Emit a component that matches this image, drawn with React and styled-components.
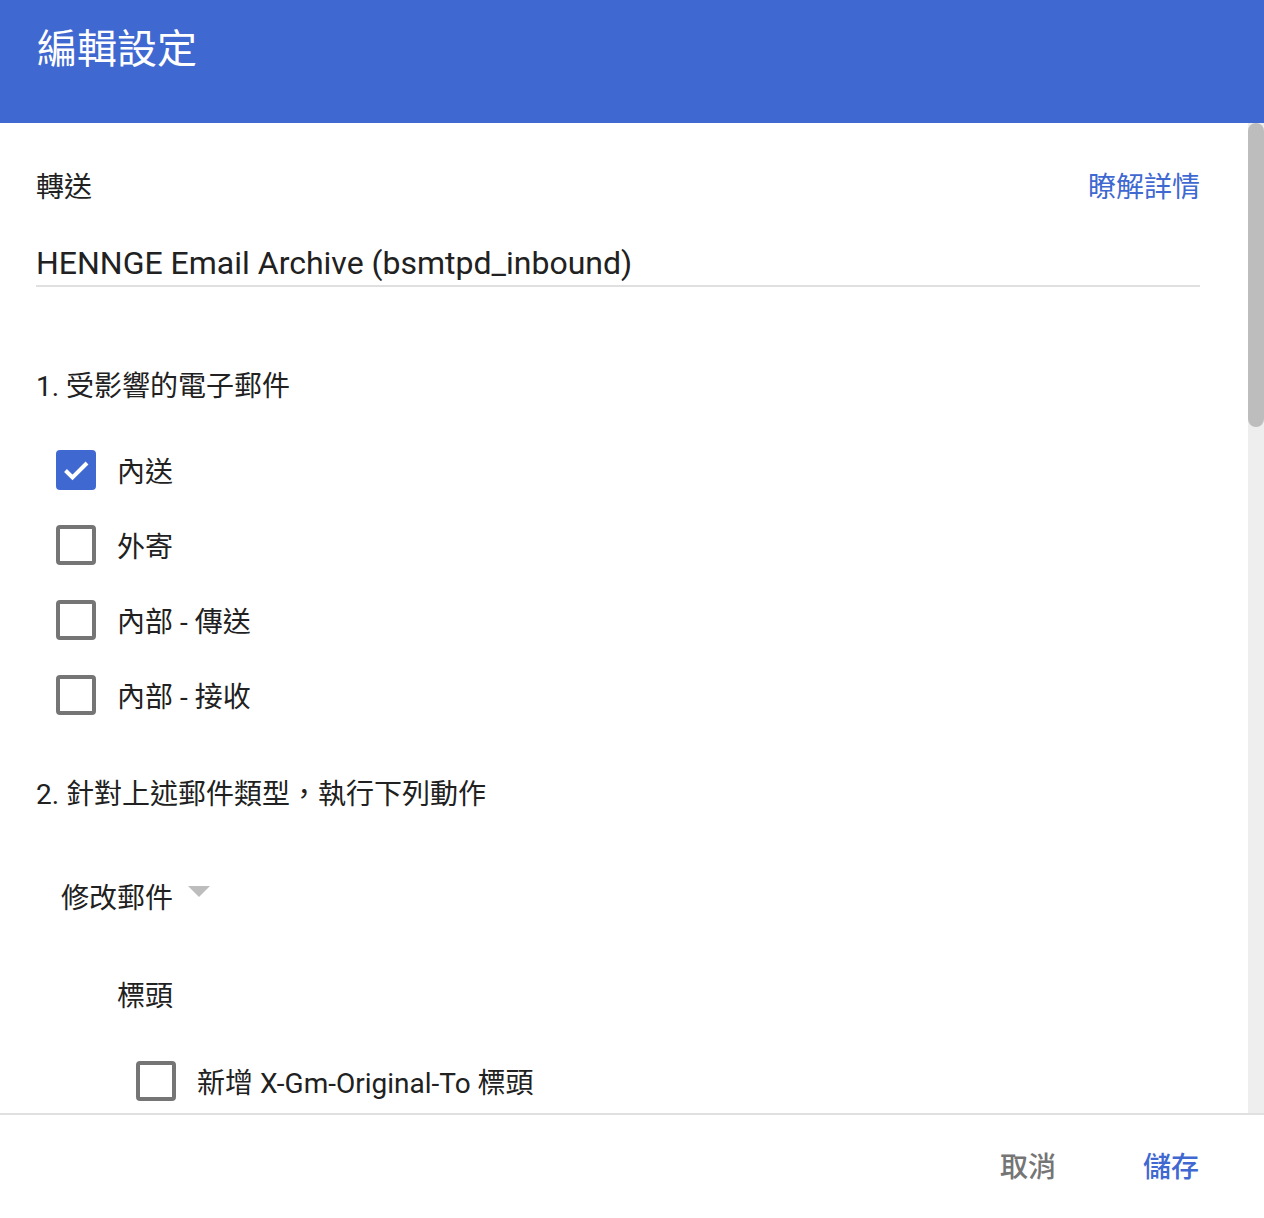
import React from 'react';
import styled, { createGlobalStyle } from 'styled-components';

const BLUE = '#4068d1';
const TEXT = '#212121';

const GlobalStyle = createGlobalStyle`
  html, body {
    margin: 0;
    padding: 0;
    background: #ffffff;
  }
  body {
    font-family: Roboto, "Noto Sans CJK TC", "Noto Sans", sans-serif;
    color: ${TEXT};
  }
`;

const Dialog = styled.div`
  display: flex;
  flex-direction: column;
  width: 1264px;
  height: 1218px;
  overflow: hidden;
`;

const Header = styled.header`
  flex: 0 0 123px;
  background: ${BLUE};
  color: #ffffff;
  box-sizing: border-box;
  padding: 24px 0 0 37px;
`;

const Title = styled.h1`
  margin: 0;
  font-size: 40px;
  line-height: 52px;
  font-weight: 400;
`;

const Body = styled.div`
  flex: 1 1 auto;
  min-height: 0;
  display: flex;
`;

const Scroller = styled.div`
  flex: 1 1 auto;
  overflow: hidden;
`;

/* scrollbar drawn by hand, the headless page hides the native one */
const Track = styled.div`
  flex: 0 0 16px;
  background: #eeeeee;
  display: flex;
  flex-direction: column;
`;

const Thumb = styled.div`
  height: 304px;
  background: #bdbdbd;
  border-radius: 8px;
`;

const Content = styled.div`
  padding: 42px 48px 40px 36px;
`;

const TopRow = styled.div`
  display: flex;
  justify-content: space-between;
  align-items: center;
  font-size: 28px;
  line-height: 46px;
`;

const Link = styled.a`
  color: ${BLUE};
  text-decoration: none;
`;

const Field = styled.div`
  margin-top: 30px;
  font-size: 32px;
  line-height: 44px;
  border-bottom: 2px solid #e0e0e0;
`;

const SectionTitle = styled.div`
  margin-top: ${p => p.$top}px;
  font-size: 28px;
  line-height: 44px;
`;

const OptionList = styled.div`
  margin-top: ${p => p.$top || 0}px;
  padding-left: ${p => p.$indent}px;
  display: flex;
  flex-direction: column;
`;

const Option = styled.label`
  display: flex;
  align-items: center;
  gap: 21px;
  height: 75px;
  font-size: 28px;
`;

const Box = styled.span`
  flex: 0 0 auto;
  box-sizing: border-box;
  width: 40px;
  height: 40px;
  border-radius: 4px;
  border: ${p => (p.$checked ? 'none' : '4px solid #757575')};
  background: ${p => (p.$checked ? BLUE : 'transparent')};
  display: flex;
  align-items: center;
  justify-content: center;
`;

const Select = styled.div`
  margin-top: 60px;
  padding-left: 25px;
  display: flex;
  align-items: center;
  gap: 15px;
  font-size: 28px;
  line-height: 44px;
`;

const Caret = styled.span`
  width: 0;
  height: 0;
  border-left: 11px solid transparent;
  border-right: 11px solid transparent;
  border-top: 11px solid #bdbdbd;
  margin-top: -16px;
`;

const SubTitle = styled.div`
  margin-top: 54px;
  padding-left: 81px;
  font-size: 28px;
  line-height: 44px;
`;

const Footer = styled.footer`
  flex: 0 0 105px;
  box-sizing: border-box;
  border-top: 2px solid #e0e0e0;
  display: flex;
  justify-content: flex-end;
  align-items: center;
  gap: 87px;
  padding: 0 65px 3px 0;
`;

const Button = styled.button`
  border: none;
  background: none;
  padding: 0;
  font-family: inherit;
  font-size: 28px;
  font-weight: 500;
  color: ${p => (p.$primary ? BLUE : '#757575')};
  cursor: pointer;
`;

const Checkbox = ({ checked, children }) => (
  <Option>
    <Box $checked={checked}>
      {checked && (
        <svg width="40" height="40" viewBox="0 0 40 40">
          <polyline
            points="9.5,20.5 16.5,27.5 31,13"
            fill="none"
            stroke="#ffffff"
            strokeWidth="4"
          />
        </svg>
      )}
    </Box>
    {children}
  </Option>
);

export default function App() {
  return (
    <Dialog>
      <GlobalStyle />
      <Header>
        <Title>編輯設定</Title>
      </Header>
      <Body>
        <Scroller>
          <Content>
            <TopRow>
              <span>轉送</span>
              <Link href="#">瞭解詳情</Link>
            </TopRow>
            <Field>HENNGE Email Archive (bsmtpd_inbound)</Field>

            <SectionTitle $top={78}>1. 受影響的電子郵件</SectionTitle>
            <OptionList $top={23} $indent={20}>
              <Checkbox checked>內送</Checkbox>
              <Checkbox>外寄</Checkbox>
              <Checkbox>內部 - 傳送</Checkbox>
              <Checkbox>內部 - 接收</Checkbox>
            </OptionList>

            <SectionTitle $top={41}>2. 針對上述郵件類型，執行下列動作</SectionTitle>
            <Select>
              <span>修改郵件</span>
              <Caret />
            </Select>
            <SubTitle>標頭</SubTitle>
            <OptionList $top={24} $indent={100}>
              <Checkbox>新增 X-Gm-Original-To 標頭</Checkbox>
            </OptionList>
          </Content>
        </Scroller>
        <Track>
          <Thumb />
        </Track>
      </Body>
      <Footer>
        <Button>取消</Button>
        <Button $primary>儲存</Button>
      </Footer>
    </Dialog>
  );
}
